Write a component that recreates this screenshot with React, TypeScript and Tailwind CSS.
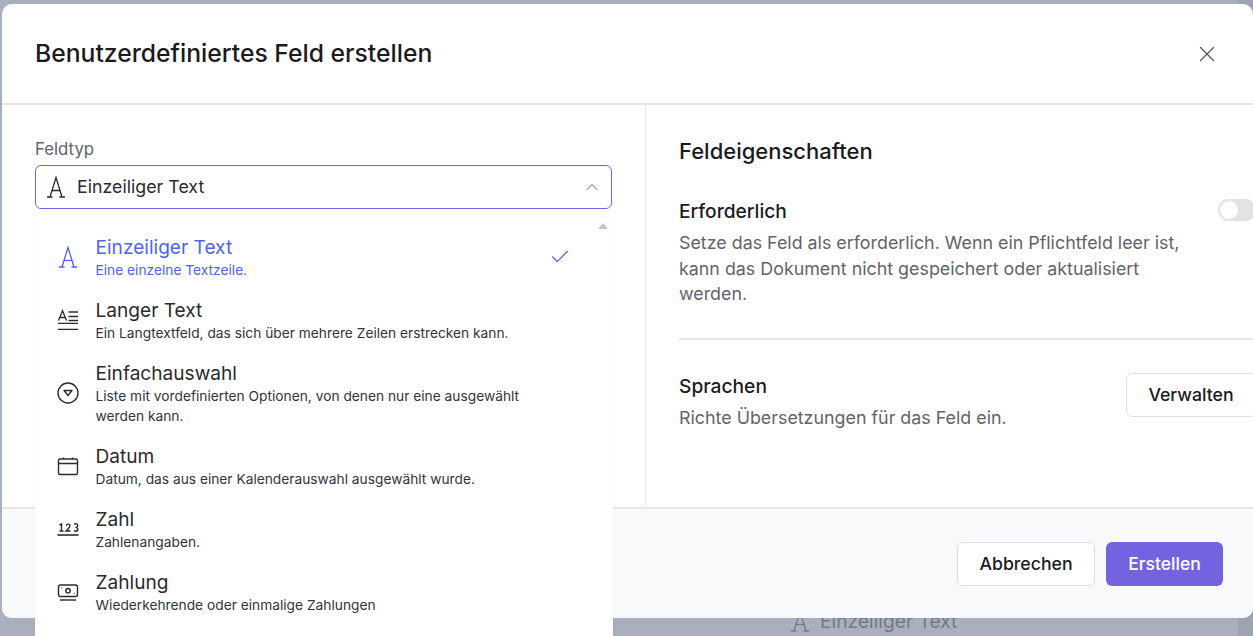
import React from "react";
import { X, ChevronUp, Check } from "lucide-react";

const AIcon = ({ className = "" }: { className?: string }) => (
  <svg width="24" height="24" viewBox="0 0 24 24" fill="none" stroke="currentColor" strokeWidth="1.3" className={className}>
    <path d="M6 22 L12 2.5 L18 22" />
    <path d="M7.8 15.5 H16.2" />
    <path d="M3 22 H8.5 M15.5 22 H21" />
  </svg>
);
const LongIcon = () => (
  <svg width="24" height="24" viewBox="0 0 24 24" fill="none" stroke="currentColor" strokeWidth="1.3">
    <path d="M2.5 12.5 L6.5 2.7 L10.5 12.5 M4 9.5 H9" />
    <path d="M12.5 4 H22 M12.5 8.5 H22 M12.5 12.5 H22" />
    <path d="M2 15.3 H22 M2 21.3 H22" />
  </svg>
);
const SelectIcon = () => (
  <svg width="24" height="24" viewBox="0 0 24 24" fill="none" stroke="currentColor" strokeWidth="1.4">
    <circle cx="12" cy="12" r="10" />
    <path d="M8 9.5 H16 L12 14.5 Z" strokeLinejoin="round" />
  </svg>
);
const CalIcon = () => (
  <svg width="24" height="24" viewBox="0 0 24 24" fill="none" stroke="currentColor" strokeWidth="1.4">
    <rect x="2.5" y="5" width="19" height="15.5" rx="1.5" />
    <path d="M2.5 9.5 H21.5 M7.5 3.5 V5 M16.5 3.5 V5" />
  </svg>
);
const NumIcon = () => (
  <svg width="24" height="24" viewBox="0 0 24 24" fill="none" stroke="currentColor" strokeWidth="1.4">
    <path d="M3.5 8 L5.5 7 V14 M3.5 14 H7.5 M10 8.5 Q12 6 13.8 8 Q14.5 10 10 14 H14.5 M18 7.2 Q21.5 6 21.8 8.5 Q21.5 10.3 19.5 10.4 Q22.5 11 21.8 13 Q20.5 15 18 13.6" />
    <path d="M1.5 18 H22.5" strokeWidth="1.6" />
  </svg>
);
const PayIcon = () => (
  <svg width="24" height="24" viewBox="0 0 24 24" fill="none" stroke="currentColor" strokeWidth="1.4">
    <rect x="2.5" y="5" width="19" height="11.5" rx="2" />
    <circle cx="12" cy="10.7" r="2.2" />
    <path d="M5.5 8 H6.3 M17.7 13.5 H18.5" />
    <path d="M4 20 H20" />
  </svg>
);

const items = [
  { t: "Langer Text", d: "Ein Langtextfeld, das sich über mehrere Zeilen erstrecken kann.", i: <LongIcon /> },
  { t: "Einfachauswahl", d: "Liste mit vordefinierten Optionen, von denen nur eine ausgewählt werden kann.", i: <SelectIcon /> },
  { t: "Datum", d: "Datum, das aus einer Kalenderauswahl ausgewählt wurde.", i: <CalIcon /> },
  { t: "Zahl", d: "Zahlenangaben.", i: <NumIcon /> },
  { t: "Zahlung", d: "Wiederkehrende oder einmalige Zahlungen", i: <PayIcon /> },
];

export default function App() {
  return (
    <div className="relative h-[636px] w-[1253px] overflow-hidden bg-[#a9afbc] pl-[2px] pt-[4px] font-['Inter',sans-serif] text-[#1a1a1f]">
      <div className="absolute inset-y-0 right-0 w-[15px] bg-[#9da3b1]" />
      <div className="absolute left-[788px] top-[608px] flex items-center gap-[8px] text-[19.2px] leading-[26px] text-[#747a89]">
        <AIcon />
        <span>Einzeiliger Text</span>
      </div>
      <div className="relative flex h-[614px] w-[1251px] flex-col overflow-hidden rounded-[10px] bg-white">
        <div className="flex h-[101px] shrink-0 items-center justify-between border-b-2 border-[#e5e6ea] pl-[33px] pr-[33px]">
          <h1 className="text-[24.7px] font-medium">Benutzerdefiniertes Feld erstellen</h1>
          <X size={26} strokeWidth={1.2} className="text-[#55565e]" />
        </div>
        <div className="flex h-[402px] shrink-0">
          <div className="w-[644px] shrink-0 border-r border-[#e5e6ea] px-[33px] pt-[32px]">
            <div className="mb-[4px] text-[16.8px] leading-[24px] text-[#62636c]">Feldtyp</div>
            <div className="flex h-[44px] w-[577px] items-center rounded-md border border-[#7463e0] pl-[8px] pr-[9px]">
              <AIcon className="text-[#2a2a30]" />
              <span className="ml-[9px] flex-1 text-[17.8px] text-[#2a2a30]">Einzeiliger Text</span>
              <ChevronUp size={20} strokeWidth={1.5} className="text-[#a9a9b0]" />
            </div>
          </div>
          <div className="w-[610px] shrink-0 pl-[33px]">
            <h2 className="mt-[31px] text-[22px] leading-[30px] font-medium">Feldeigenschaften</h2>
            <div className="mt-[33px] flex items-start justify-between">
              <div className="w-[520px]">
                <div className="text-[19.2px] leading-[24px] font-medium">Erforderlich</div>
                <p className="mt-[7px] text-[17.85px] leading-[25.5px] text-[#62636c]">
                  Setze das Feld als erforderlich. Wenn ein Pflichtfeld leer ist, kann das Dokument nicht gespeichert oder aktualisiert werden.
                </p>
              </div>
              <div className="flex h-[22px] w-[38px] shrink-0 items-center rounded-full bg-[#e3e3e6] pl-[2px]">
                <div className="h-[18px] w-[18px] rounded-full bg-white" />
              </div>
            </div>
            <div className="mt-[31.5px] h-[2px] w-[577px] bg-[#e5e6ea]" />
            <div className="mt-[34px] flex w-[577px] items-center justify-between">
              <div>
                <div className="text-[19.2px] leading-[24px] font-medium">Sprachen</div>
                <p className="mt-[7px] text-[17.85px] leading-[25.5px] text-[#62636c]">Richte Übersetzungen für das Feld ein.</p>
              </div>
              <button className="-mt-[14px] h-[44px] w-[130px] rounded-md border border-[#dfe0e5] bg-white text-[17.7px] font-medium">Verwalten</button>
            </div>
          </div>
        </div>
        <div className="flex flex-1 items-center justify-end gap-[11px] border-t-2 border-[#e5e6ea] bg-[#f8f9fb] pr-[30px] pt-[1px]">
          <button className="h-[44px] w-[138px] rounded-md border border-[#dfe0e5] bg-white text-[17.7px] font-medium">Abbrechen</button>
          <button className="h-[44px] w-[117px] rounded-md bg-[#7463e0] text-[17.5px] font-medium text-white">Erstellen</button>
        </div>
      </div>
      <div className="absolute left-[35px] top-[218px] h-[430px] w-[578px] rounded-md bg-white pt-[10px] shadow-[0_0_4px_rgba(0,0,0,0.05)]">
        <div className="absolute right-[5px] top-[5px] h-0 w-0 border-x-[5px] border-b-[6px] border-x-transparent border-b-[#c4c4c8]" />
        <div className="flex items-center pb-[11px] pl-[21px] pr-[42px] pt-[6px] text-[#4f63f0]">
          <AIcon className="shrink-0" />
          <div className="ml-[15.5px] flex-1">
            <div className="text-[19.1px] leading-[26px]">Einzeiliger Text</div>
            <div className="text-[13.75px] leading-[20px]">Eine einzelne Textzeile.</div>
          </div>
          <Check size={22} strokeWidth={1.4} />
        </div>
        {items.map((x) => (
          <div key={x.t} className="flex items-center pb-[11px] pl-[21px] pr-[80px] pt-[6px]">
            <div className="shrink-0 text-[#2a2a30]">{x.i}</div>
            <div className="ml-[15.5px]">
              <div className="text-[19.1px] leading-[26px] text-[#2a2a30]">{x.t}</div>
              <div className="text-[13.75px] leading-[20px] text-[#33333a]">{x.d}</div>
            </div>
          </div>
        ))}
      </div>
    </div>
  );
}
